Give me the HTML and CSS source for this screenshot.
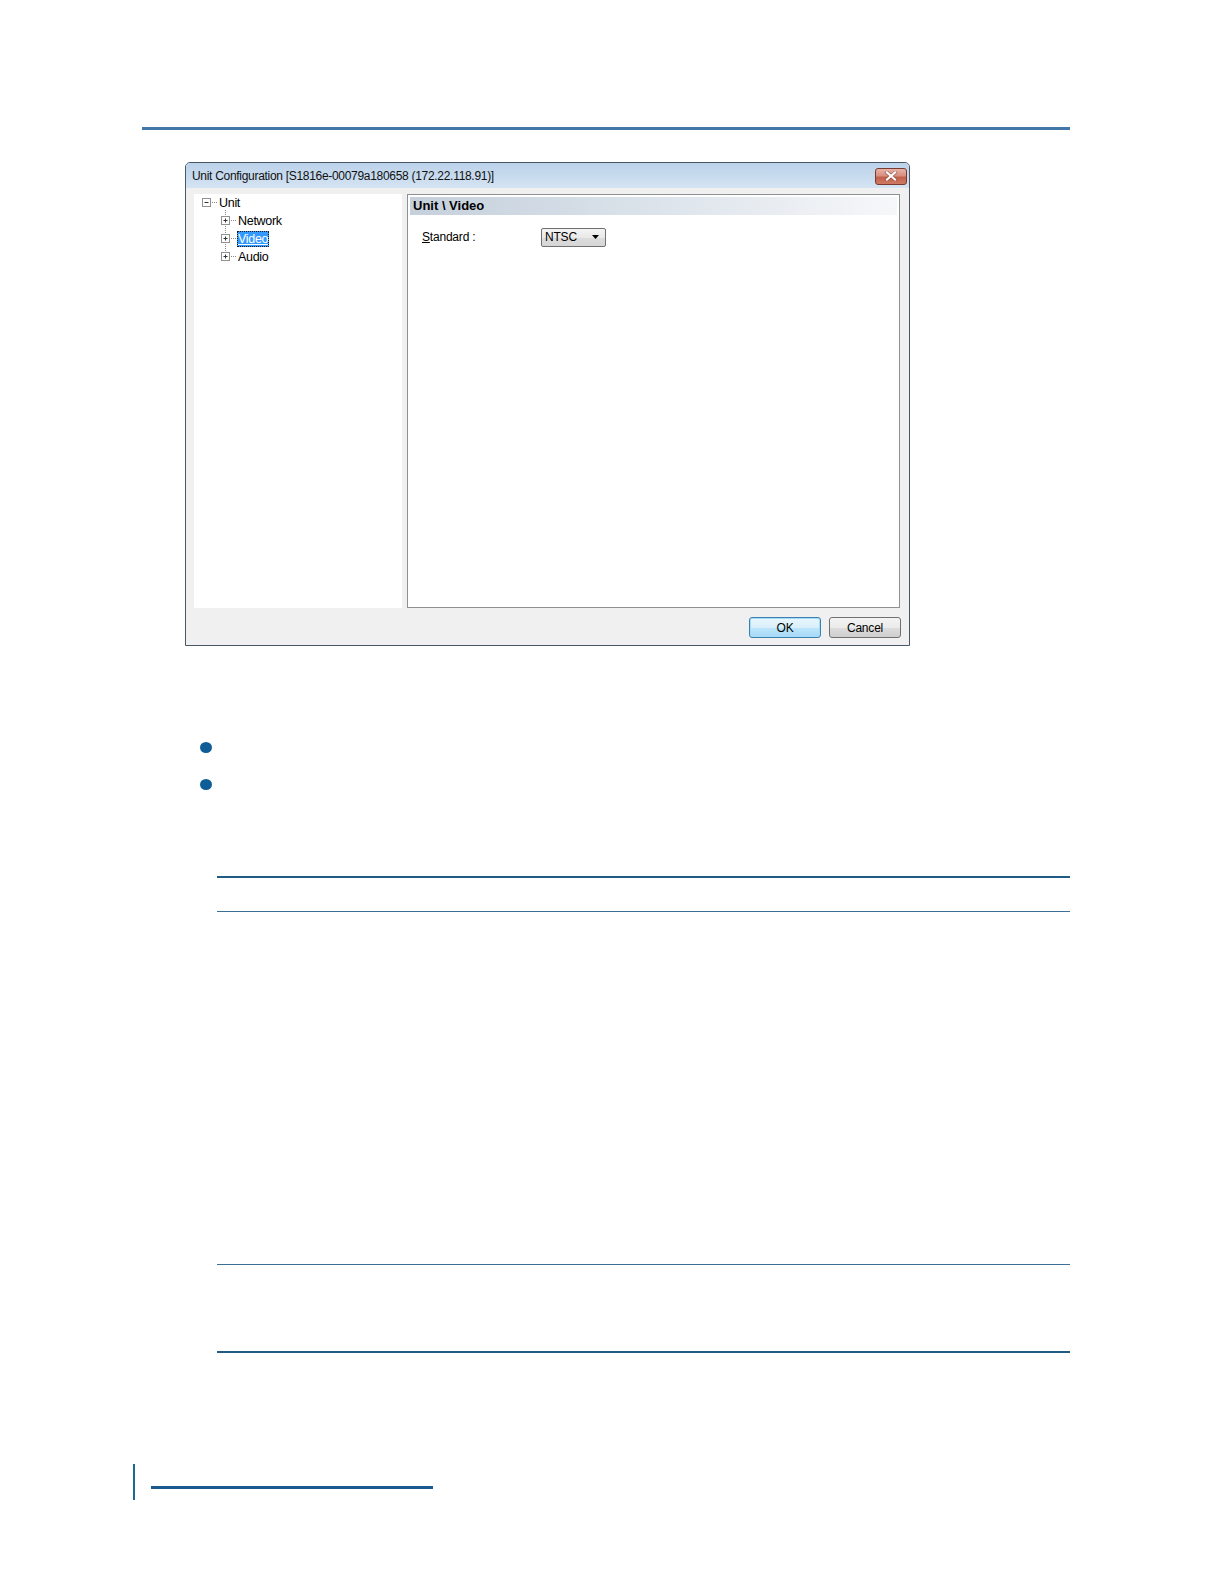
FILE: index.html
```html
<!DOCTYPE html>
<html>
<head>
<meta charset="utf-8">
<title>Unit Configuration</title>
<link rel="stylesheet" href="styles.css">
</head>
<body>
<div class="page">
  <div class="top-rule"></div>

  <div class="figure">
    <div class="dialog">
      <div class="titlebar">
        <span class="title-text">Unit Configuration [S1816e-00079a180658 (172.22.118.91)]</span>
        <span class="close-btn">
          <svg width="14" height="10" viewBox="0 0 14 10"><path d="M3 1.5 L11 8.5 M11 1.5 L3 8.5" stroke="#5a2418" stroke-width="3.6" stroke-linecap="square" opacity="0.45"/><path d="M3 1.5 L11 8.5 M11 1.5 L3 8.5" stroke="#fff" stroke-width="2.2" stroke-linecap="square"/></svg>
        </span>
      </div>
      <div class="dlg-body">
        <div class="panels">
          <div class="tree">
            <div class="tree-vline"></div>
            <div class="tree-row root">
              <svg class="exp" width="16" height="10" viewBox="0 0 16 10"><rect x="0.5" y="0.5" width="8" height="8" fill="#fff" stroke="#919191"/><path d="M2.5 4.5 H6.5" stroke="#333" stroke-width="1"/><path d="M10 4.5 H15" stroke="#8a8a8a" stroke-dasharray="1 1"/></svg>
              <span class="label">Unit</span>
            </div>
            <div class="tree-row child">
              <svg class="exp" width="16" height="10" viewBox="0 0 16 10"><rect x="0.5" y="0.5" width="8" height="8" fill="#fff" stroke="#919191"/><path d="M2.5 4.5 H6.5 M4.5 2.5 V6.5" stroke="#333" stroke-width="1"/><path d="M10 4.5 H15" stroke="#8a8a8a" stroke-dasharray="1 1"/></svg>
              <span class="label">Network</span>
            </div>
            <div class="tree-row child">
              <svg class="exp" width="16" height="10" viewBox="0 0 16 10"><rect x="0.5" y="0.5" width="8" height="8" fill="#fff" stroke="#919191"/><path d="M2.5 4.5 H6.5 M4.5 2.5 V6.5" stroke="#333" stroke-width="1"/><path d="M10 4.5 H15" stroke="#8a8a8a" stroke-dasharray="1 1"/></svg>
              <span class="label selected">Video</span>
            </div>
            <div class="tree-row child">
              <svg class="exp" width="16" height="10" viewBox="0 0 16 10"><rect x="0.5" y="0.5" width="8" height="8" fill="#fff" stroke="#919191"/><path d="M2.5 4.5 H6.5 M4.5 2.5 V6.5" stroke="#333" stroke-width="1"/><path d="M10 4.5 H15" stroke="#8a8a8a" stroke-dasharray="1 1"/></svg>
              <span class="label">Audio</span>
            </div>
          </div>
          <div class="content">
            <div class="content-header">Unit \ Video</div>
            <div class="field-row">
              <span class="field-label"><u>S</u>tandard :</span>
              <span class="select">
                <span class="select-value">NTSC</span>
                <svg width="7" height="4" viewBox="0 0 7 4"><path d="M0 0 H7 L3.5 4 Z" fill="#000"/></svg>
              </span>
            </div>
          </div>
        </div>
        <div class="buttons">
          <span class="btn default">OK</span>
          <span class="btn">Cancel</span>
        </div>
      </div>
    </div>
  </div>

  <ul class="bullets">
    <li></li>
    <li></li>
  </ul>

  <div class="table">
    <div class="t-head"></div>
    <div class="t-body"></div>
    <div class="t-foot"></div>
  </div>

  <div class="footer">
    <div class="footer-bar"></div>
    <div class="footer-line"></div>
  </div>
</div>
</body>
</html>
```

FILE: styles.css
```css
html, body {
  margin: 0;
  padding: 0;
  background: #ffffff;
}

.page {
  padding-top: 127px;
  font-family: "Liberation Sans", Arial, sans-serif;
}

.top-rule {
  margin-left: 142px;
  width: 928px;
  height: 3px;
  background: #4278a8;
}

.figure {
  margin-top: 32px;
  margin-left: 185px;
}

.dialog {
  width: 723px;
  border: 1px solid #4a5566;
  border-radius: 5px 5px 0 0;
  background: #f0f0f0;
  font-size: 12px;
  color: #000;
}

.titlebar {
  height: 25px;
  display: flex;
  align-items: center;
  justify-content: space-between;
  padding: 0 2px 0 6px;
  border-radius: 4px 4px 0 0;
  background: linear-gradient(to bottom, #bcd2ea 0%, #c9dcef 60%, #d5e4f3 100%);
}

.title-text {
  font-size: 12px;
  letter-spacing: -0.3px;
  color: #111;
  margin-top: 1px;
}

.close-btn {
  width: 30px;
  height: 15px;
  border: 1px solid #7a3a30;
  border-radius: 3px;
  background: linear-gradient(to bottom, #e7b2a6 0%, #d98f80 45%, #c2604c 55%, #cf7a64 100%);
  display: flex;
  align-items: center;
  justify-content: center;
  margin-top: 1px;
}

.dlg-body {
  padding: 6px 8px 7px 8px;
}

.panels {
  display: flex;
  gap: 5px;
  height: 414px;
}

.tree {
  position: relative;
  width: 208px;
  background: #ffffff;
  box-sizing: border-box;
}

.tree-vline {
  position: absolute;
  left: 31px;
  top: 16px;
  height: 47px;
  border-left: 1px dotted #8a8a8a;
}

.tree-row {
  position: relative;
  height: 18px;
  display: flex;
  align-items: center;
}

.tree-row.root {
  padding-left: 8px;
}

.tree-row.child {
  padding-left: 27px;
}

.exp {
  display: block;
  flex: none;
}

.label {
  font-size: 12.5px;
  letter-spacing: -0.3px;
  padding: 1px 1px;
  line-height: 14px;
}

.label.selected {
  background: #3399ff;
  color: #ffffff;
  outline: 1px dotted #1a1a1a;
  outline-offset: -1px;
  text-decoration: underline;
}

.content {
  width: 493px;
  box-sizing: border-box;
  border: 1px solid #8e9194;
  background: #ffffff;
  padding: 2px;
}

.content-header {
  height: 18px;
  line-height: 18px;
  padding-left: 3px;
  font-weight: bold;
  font-size: 13px;
  letter-spacing: 0;
  background: linear-gradient(to right, #c5d0dc 0%, #d9e1e9 45%, #f6f7f9 100%);
}

.field-row {
  display: flex;
  align-items: center;
  margin-top: 12px;
  padding-left: 12px;
  height: 20px;
}

.field-label {
  width: 119px;
  font-size: 12px;
  letter-spacing: -0.2px;
}

.field-label u {
  text-decoration: underline;
}

.select {
  width: 65px;
  height: 19px;
  box-sizing: border-box;
  border: 1px solid #707070;
  border-radius: 2px;
  background: linear-gradient(to bottom, #f4f4f4 0%, #e9e9e9 50%, #dcdcdc 51%, #d6d6d6 100%);
  display: flex;
  align-items: center;
  justify-content: space-between;
  padding: 0 6px 0 3px;
}

.select-value {
  font-size: 12px;
  letter-spacing: -0.2px;
}

.buttons {
  display: flex;
  justify-content: flex-end;
  gap: 8px;
  margin-top: 9px;
}

.btn {
  width: 72px;
  height: 21px;
  box-sizing: border-box;
  border: 1px solid #707070;
  border-radius: 3px;
  background: linear-gradient(to bottom, #f3f3f3 0%, #ebebeb 50%, #dddddd 51%, #cfcfcf 100%);
  display: flex;
  align-items: center;
  justify-content: center;
  font-size: 12px;
  letter-spacing: -0.2px;
}

.btn.default {
  border-color: #3c7fb1;
  box-shadow: inset 0 0 0 1px #a6dcf7;
  background: linear-gradient(to bottom, #eaf6fd 0%, #d9f0fc 50%, #bee6fd 51%, #a7d9f5 100%);
}

.bullets {
  list-style: none;
  margin: 83px 0 0 0;
  padding: 0 0 0 200px;
}

.bullets li {
  height: 37px;
  display: flex;
  align-items: center;
}

.bullets li::before {
  content: "";
  width: 12px;
  height: 11px;
  border-radius: 50%;
  background: #0e5d96;
}

.table {
  margin-top: 73px;
  margin-left: 217px;
  width: 853px;
}

.t-head {
  height: 33px;
  border-top: 2px solid #1f5b82;
  border-bottom: 1px solid #3b7096;
}

.t-body {
  height: 352px;
  border-bottom: 1px solid #3b7096;
}

.t-foot {
  height: 86px;
  border-bottom: 2px solid #1f5b82;
}

.footer {
  margin-top: 111px;
  display: flex;
  align-items: flex-end;
  margin-left: 133px;
}

.footer-bar {
  width: 2px;
  height: 36px;
  background: #1a6894;
}

.footer-line {
  margin-left: 16px;
  margin-bottom: 11px;
  width: 282px;
  height: 3px;
  background: #1b5a8f;
}
```
